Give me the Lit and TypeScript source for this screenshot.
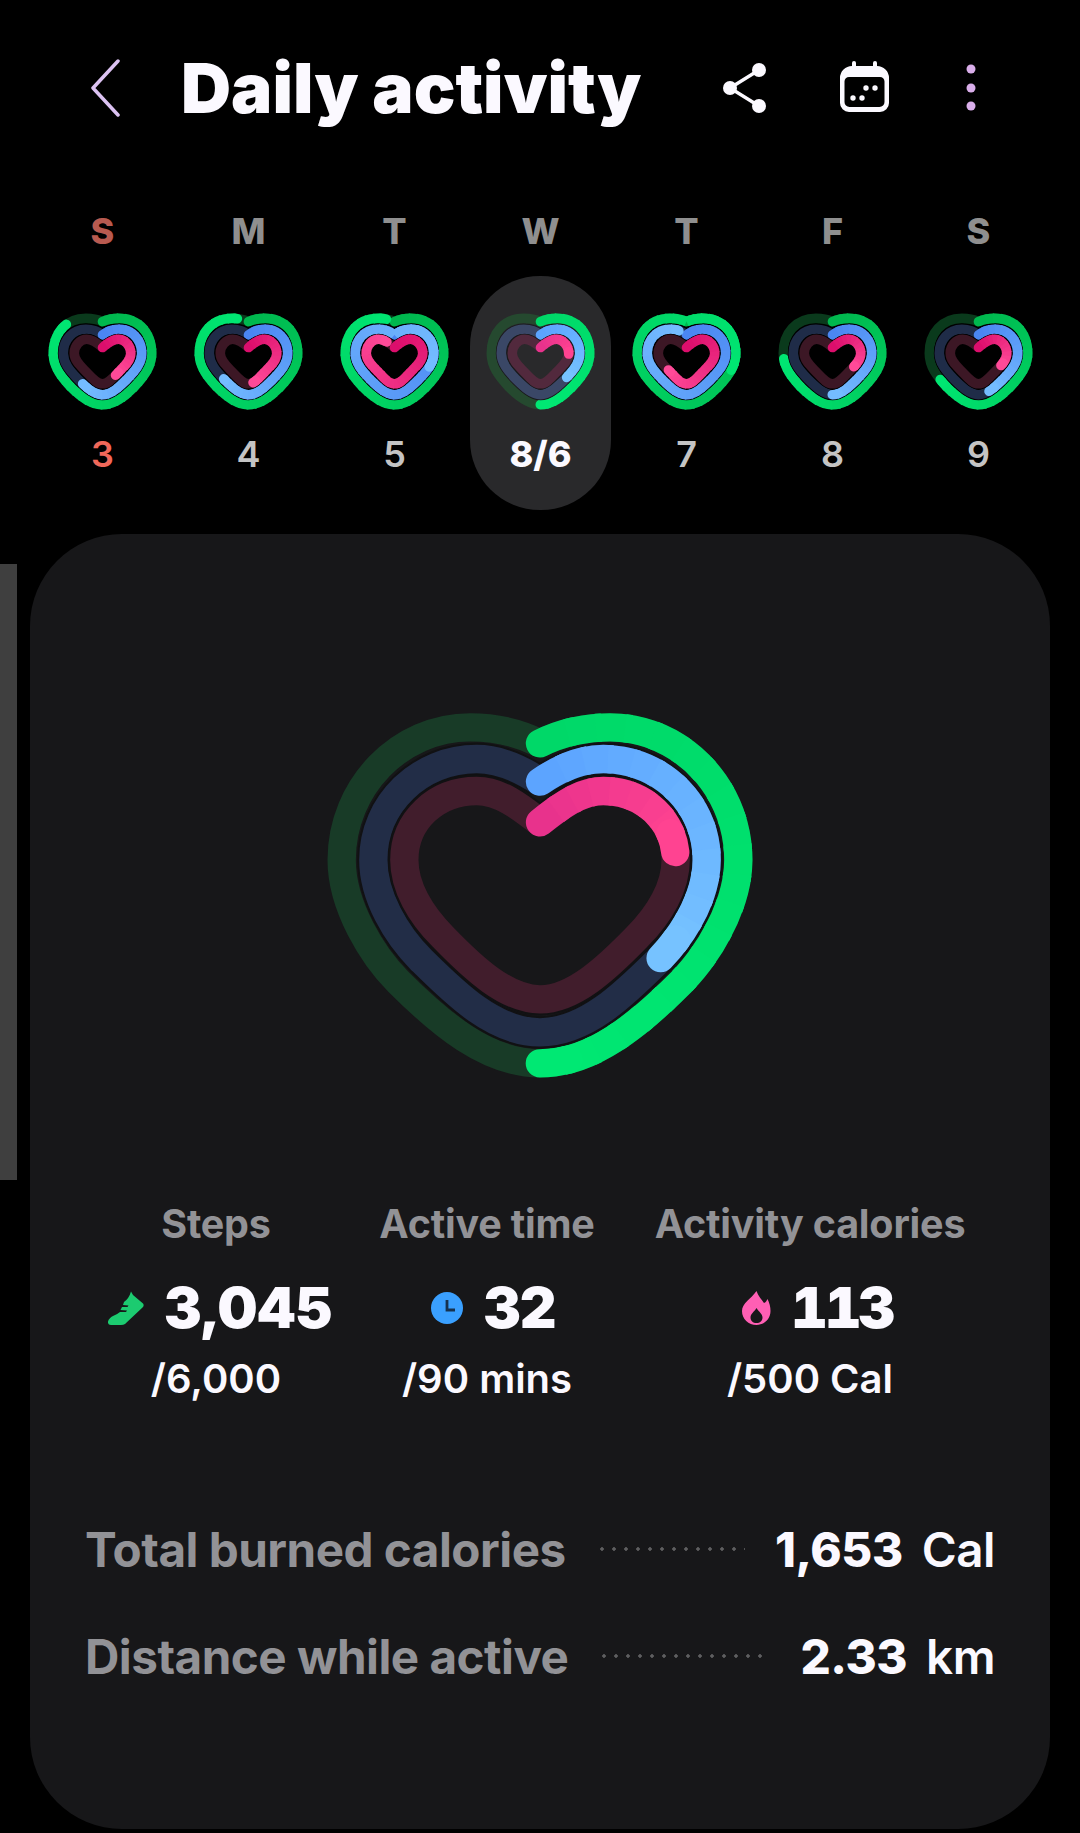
import { LitElement, html, css, svg } from 'lit';
import { customElement, property } from 'lit/decorators.js';

type RGB = [number, number, number];

interface Ring {
  path: string;
  track: string;
  from: RGB;
  to: RGB;
  progress: number;
}

const LARGE_PATHS = [
  'M690 160C750 130 820 112 900 112C1110 112 1285 290 1285 510C1285 650 1190 800 1115 875C990 1000 850 1120 690 1120C530 1120 390 1000 265 875C190 800 95 650 95 510C95 290 270 112 480 112C560 112 630 130 690 160',
  'M690 275C750 235 810 207 880 207C1050 207 1190 340 1190 510C1190 620 1120 736 1048 808C950 905 830 1027 690 1027C550 1027 430 905 332 808C260 736 190 620 190 510C190 340 330 207 500 207C570 207 630 235 690 275',
  'M690 397C750 350 810 303 880 303C1000 303 1097 390 1097 510C1097 590 1050 672 981 741C890 835 790 928 690 928C590 928 490 835 399 741C330 672 283 590 283 510C283 390 380 303 500 303C570 303 630 350 690 397',
];

const SMALL_PATHS = [
  'M190 65C205 58 225 55 240 55C300 55 338 100 338 160C338 200 315 230 285 262C255 292 225 315 190 315C155 315 125 292 95 262C65 230 42 200 42 160C42 100 80 55 140 55C155 55 175 58 190 65',
  'M190 105C205 92 225 88 240 88C280 88 308 120 308 160C308 190 288 213 264 238C238 264 215 285 190 285C165 285 142 264 116 238C92 213 72 190 72 160C72 120 100 88 140 88C155 88 175 92 190 105',
  'M190 143C205 130 222 118 238 118C258 118 275 138 275 160C275 180 260 195 245 210C225 230 210 252 190 252C170 252 155 230 135 210C120 195 105 180 105 160C105 138 122 118 142 118C158 118 175 130 190 143',
];

const BRIGHT: [RGB, RGB][] = [
  [[0, 216, 104], [0, 232, 115]],
  [[92, 164, 255], [118, 194, 255]],
  [[232, 50, 140], [255, 67, 145]],
];

const VIVID: [RGB, RGB][] = [
  [[0, 184, 78], [0, 230, 114]],
  [[74, 134, 242], [116, 188, 255]],
  [[220, 14, 108], [255, 74, 152]],
];

const THEMES = {
  large: {
    tracks: ['#183b27', '#222d47', '#411d2c'],
    under: '#111113',
    hole: '#171719',
    colors: BRIGHT,
  },
  small: {
    tracks: ['#0a3a1c', '#1f2c48', '#3c1725'],
    under: '#000000',
    hole: '#000000',
    colors: VIVID,
  },
  selected: {
    tracks: ['#25492f', '#3a4766', '#52293d'],
    under: '#19191b',
    hole: '#29292b',
    colors: BRIGHT,
  },
};

const mix = (a: RGB, b: RGB, t: number) =>
  `rgb(${a.map((v, i) => Math.round(v + (b[i] - v) * t)).join(',')})`;

@customElement('heart-rings')
export class HeartRings extends LitElement {
  @property({ type: String }) theme: keyof typeof THEMES = 'small';
  @property({ type: Array }) progress: number[] = [0, 0, 0];

  static styles = css`
    :host {
      display: block;
    }
    svg {
      display: block;
      width: 100%;
      height: 100%;
      fill: none;
    }
  `;

  // svg has no gradient along a path, so the arc is cut into short dashes
  private renderProgress(ring: Ring, width: number) {
    const step = 2.5;
    const count = Math.ceil(ring.progress / step);
    const parts = [];
    for (let i = 0; i < count; i++) {
      const begin = i * step;
      const end = Math.min(begin + step + 0.5, ring.progress);
      const lapBegin = begin % 100;
      const length = Math.min(end - begin, 100 - lapBegin);
      const round = i === 0 || i === count - 1;
      parts.push(svg`<path
        d=${ring.path}
        pathLength="100"
        stroke=${mix(ring.from, ring.to, i / Math.max(count - 1, 1))}
        stroke-width=${width}
        stroke-linecap=${round ? 'round' : 'butt'}
        stroke-dasharray="${length} ${200 - length}"
        stroke-dashoffset=${-lapBegin}
      ></path>`);
    }
    return parts;
  }

  render() {
    const large = this.theme === 'large';
    const paths = large ? LARGE_PATHS : SMALL_PATHS;
    const width = large ? 85 : 29;
    const gapped = large ? 97 : 33;
    const box = large ? '0 0 1380 1230' : '20 33 340 304';
    const theme = THEMES[this.theme];

    return html`<svg viewBox=${box}>
      ${paths.map((path, i) => {
        const ring: Ring = {
          path,
          track: theme.tracks[i],
          from: theme.colors[i][0],
          to: theme.colors[i][1],
          progress: this.progress[i],
        };
        return svg`
          ${i > 0
            ? svg`<path d=${path} stroke=${theme.under} stroke-width=${gapped} stroke-linejoin="round"></path>`
            : ''}
          ${i === 2 ? svg`<path d=${path} fill=${theme.hole}></path>` : ''}
          <path d=${path} stroke=${ring.track} stroke-width=${width} stroke-linejoin="round"></path>
          ${this.renderProgress(ring, width)}
        `;
      })}
    </svg>`;
  }
}

const DAYS = [
  { label: 'S', date: '3', progress: [87, 60, 40], tone: 'sun' },
  { label: 'M', date: '4', progress: [96, 63, 47], tone: '' },
  { label: 'T', date: '5', progress: [97, 130, 94], tone: '' },
  { label: 'W', date: '8/6', progress: [50, 36, 24], tone: 'today' },
  { label: 'T', date: '7', progress: [130, 96, 64], tone: '' },
  { label: 'F', date: '8', progress: [74, 50, 33], tone: '' },
  { label: 'S', date: '9', progress: [66, 45, 32], tone: '' },
];

@customElement('app-root')
export class AppRoot extends LitElement {
  static styles = css`
    :host {
      display: block;
      position: relative;
      min-height: 1833px;
      background: #000;
      color: #fbf9ff;
      font-family: Inter, 'Noto Sans', sans-serif;
      overflow: hidden;
    }

    .header {
      display: flex;
      align-items: center;
      height: 176px;
      padding: 0 102px 0 90px;
      box-sizing: border-box;
    }

    .back {
      width: 30px;
      height: 58px;
      fill: none;
      stroke: #dcc2f2;
      stroke-width: 3.5;
      stroke-linecap: round;
      stroke-linejoin: round;
    }

    .title {
      margin: 0 0 0 61px;
      font-size: 69.3px;
      font-weight: 900;
      line-height: 80px;
      white-space: nowrap;
    }

    .actions {
      display: flex;
      align-items: center;
      margin-left: auto;
    }

    .share {
      width: 50px;
      height: 50px;
      margin-right: 67px;
    }

    .calendar {
      width: 56px;
      height: 56px;
      margin-right: 68px;
    }

    .menu {
      width: 14px;
      height: 52px;
    }

    .week {
      display: grid;
      grid-template-columns: repeat(7, 146px);
      padding-left: 29.5px;
    }

    .day-label {
      height: 100px;
      padding-top: 33px;
      box-sizing: border-box;
      text-align: center;
      font-size: 36px;
      font-weight: 800;
      line-height: 44px;
      color: #8f8f8f;
    }

    .day-label.sun {
      color: #b85a50;
    }

    .day {
      display: flex;
      flex-direction: column;
      align-items: center;
      height: 234px;
      margin: 0 2.5px;
      padding-top: 35px;
      box-sizing: border-box;
      border-radius: 70px;
    }

    .day.today {
      background: #29292b;
    }

    .day heart-rings {
      width: 113px;
      height: 101px;
      flex: none;
    }

    .date {
      margin-top: 20px;
      font-size: 36px;
      font-weight: 600;
      line-height: 44px;
      color: #c4c4c4;
    }

    .date.sun {
      color: #f0685a;
    }

    .date.today {
      font-weight: 800;
      color: #fbf9ff;
    }

    .scrollbar {
      position: absolute;
      left: 0;
      top: 564px;
      width: 17px;
      height: 616px;
      background: #3f3f3f;
    }

    .card {
      display: flex;
      flex-direction: column;
      width: 1020px;
      height: 1295px;
      margin: 24px 0 0 30px;
      padding-top: 156px;
      box-sizing: border-box;
      border-radius: 92px;
      background: #171719;
    }

    .card .big {
      width: 460px;
      height: 410px;
      align-self: center;
      flex: none;
    }

    .stats {
      display: grid;
      grid-template-columns: 312px 230px 416px;
      margin: 100px 0 0 30px;
      text-align: center;
    }

    .stat-label {
      font-size: 39.5px;
      font-weight: 700;
      line-height: 48px;
      letter-spacing: -0.2px;
      color: #929296;
      white-space: nowrap;
    }

    .stat-value {
      display: flex;
      align-items: center;
      justify-content: center;
      gap: 20px;
      margin-top: 24px;
      padding-left: 12px;
      font-size: 57px;
      font-weight: 900;
      line-height: 72px;
      letter-spacing: -1.5px;
    }

    .stat:first-child .stat-value {
      padding-left: 7px;
    }

    .stat:last-child .stat-value {
      padding-left: 14px;
      font-feature-settings: 'tnum';
      letter-spacing: -3px;
    }

    .stat-value svg {
      flex: none;
    }

    .stat-goal {
      margin-top: 11px;
      font-size: 40px;
      font-weight: 600;
      line-height: 48px;
    }

    .rows {
      display: flex;
      flex-direction: column;
      gap: 47px;
      margin-top: 116px;
      padding: 0 55px;
    }

    .row {
      display: flex;
      align-items: center;
      height: 60px;
      font-size: 47.6px;
      font-weight: 700;
      letter-spacing: -0.5px;
      white-space: nowrap;
    }

    .row-label {
      color: #929296;
    }

    .leader {
      flex: 1;
      height: 6px;
      margin: 0 30px;
      background-image: radial-gradient(circle, #5e5e60 1.5px, transparent 1.9px);
      background-size: 12px 6px;
    }

    .row-value {
      font-weight: 800;
    }

    .row-unit {
      margin-left: 19px;
      font-weight: 600;
    }
  `;

  render() {
    return html`
      <div class="scrollbar"></div>
      <header class="header">
        <svg class="back" viewBox="0 0 30 58"><path d="M28 2 3 29l25 27"></path></svg>
        <h1 class="title">Daily activity</h1>
        <div class="actions">
          <svg class="share" viewBox="0 0 50 50" fill="#fbf9ff" stroke="#fbf9ff">
            <path d="M36 7 7 25l29 18" fill="none" stroke-width="3.4"></path>
            <circle cx="36" cy="7" r="7" stroke="none"></circle>
            <circle cx="7" cy="25" r="7" stroke="none"></circle>
            <circle cx="36" cy="43" r="7" stroke="none"></circle>
          </svg>
          <svg class="calendar" viewBox="0 0 56 56" fill="#fbf9ff">
            <rect x="12" y="1" width="4" height="10" rx="2"></rect>
            <rect x="33" y="1" width="4" height="10" rx="2"></rect>
            <path
              fill-rule="evenodd"
              d="M12 6h25a12 12 0 0 1 12 12v25a9 9 0 0 1-9 9H9a9 9 0 0 1-9-9V18A12 12 0 0 1 12 6ZM9 17a4.5 4.5 0 0 0-4.5 4.5V42a5 5 0 0 0 5 5h30a5 5 0 0 0 5-5V21.5A4.5 4.5 0 0 0 40 17Z"
            ></path>
            <circle cx="26" cy="28" r="2.7"></circle>
            <circle cx="35" cy="28" r="2.7"></circle>
            <circle cx="13" cy="38" r="2.7"></circle>
            <circle cx="22" cy="38" r="2.7"></circle>
          </svg>
          <svg class="menu" viewBox="0 0 14 52" fill="#d9aeea">
            <circle cx="7" cy="7" r="4.5"></circle>
            <circle cx="7" cy="26" r="4.5"></circle>
            <circle cx="7" cy="44" r="4.5"></circle>
          </svg>
        </div>
      </header>

      <section class="week">
        ${DAYS.map(
          (d) =>
            html`<div class="day-label ${d.tone === 'sun' ? 'sun' : ''}">${d.label}</div>`
        )}
        ${DAYS.map(
          (d) => html`
            <div class="day ${d.tone}">
              <heart-rings
                .theme=${d.tone === 'today' ? 'selected' : 'small'}
                .progress=${d.progress}
              ></heart-rings>
              <div class="date ${d.tone}">${d.date}</div>
            </div>
          `
        )}
      </section>

      <main class="card">
        <heart-rings class="big" .theme=${'large'} .progress=${[50, 35, 22.5]}></heart-rings>

        <div class="stats">
          <div class="stat">
            <div class="stat-label">Steps</div>
            <div class="stat-value">
              <svg width="36" height="34" viewBox="10 9 36 34" fill="#1ccb70">
                <path
                  d="M33 9.5 35 13 45 21.5Q46.5 23.5 44.5 25.5L27 42Q25.5 43 23 43H13Q9.5 43 10 39.5 11 36 15 34 19 32.5 22 30H28L29 28.5 22.5 28 24 25H29.5L30.5 23.5 25 23 26 20Q31 16.5 33 9.5Z"
                ></path>
              </svg>
              3,045
            </div>
            <div class="stat-goal">/6,000</div>
          </div>
          <div class="stat">
            <div class="stat-label">Active time</div>
            <div class="stat-value">
              <svg width="32" height="32" viewBox="0 0 32 32">
                <circle cx="16" cy="16" r="16" fill="#3aa0ff"></circle>
                <path d="M16 8v10h8" fill="none" stroke="#16324f" stroke-width="2.8"></path>
              </svg>
              32
            </div>
            <div class="stat-goal">/90 mins</div>
          </div>
          <div class="stat">
            <div class="stat-label">Activity calories</div>
            <div class="stat-value">
              <svg width="29" height="34" viewBox="0 0 29 34">
                <path
                  fill="#ff5fb4"
                  d="M14.5 0C16 5 20 9 22 12c1.5 0 3-3 3.5-4 2 4 3 8 3 12 0 8-6.5 14-14 14C6.5 34 0 28 0 20 0 12 9 8 14.5 0Z"
                ></path>
                <path
                  fill="#171719"
                  d="M14.5 17c2.5 4 6 6 6 9.5 0 3.5-2.5 5.5-6 5.5s-6-2-6-5.5c0-3.5 3.5-5.5 6-9.5Z"
                ></path>
              </svg>
              113
            </div>
            <div class="stat-goal">/500 Cal</div>
          </div>
        </div>

        <div class="rows">
          <div class="row">
            <span class="row-label">Total burned calories</span>
            <span class="leader"></span>
            <span class="row-value">1,653</span>
            <span class="row-unit">Cal</span>
          </div>
          <div class="row">
            <span class="row-label">Distance while active</span>
            <span class="leader"></span>
            <span class="row-value">2.33</span>
            <span class="row-unit">km</span>
          </div>
        </div>
      </main>
    `;
  }
}
